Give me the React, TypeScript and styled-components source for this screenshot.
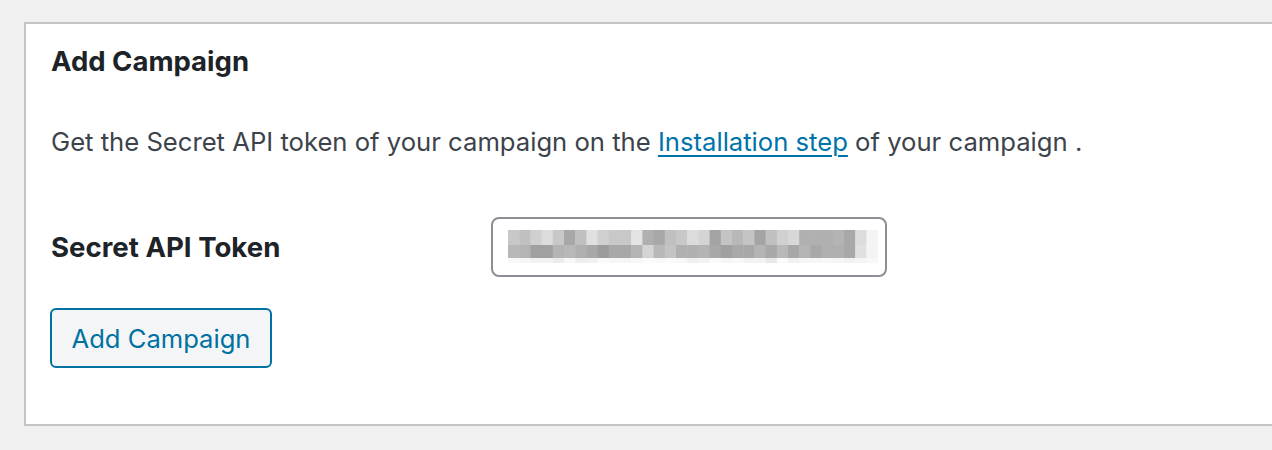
import React from "react";
import styled, { createGlobalStyle } from "styled-components";

const Global = createGlobalStyle`
  html, body { margin: 0; padding: 0; background: #f0f0f1; overflow: hidden; }
  body { font-family: Inter, "Noto Sans", sans-serif; -webkit-font-smoothing: antialiased; }
`;

const Page = styled.div`
  width: 1272px;
  height: 450px;
  padding: 22px 0 0 24px;
  box-sizing: border-box;
`;

const Panel = styled.section`
  width: 1300px;
  height: 404px;
  box-sizing: border-box;
  background: #fff;
  border: 2px solid #c3c4c7;
  padding: 0 24px;
  display: flex;
  flex-direction: column;
`;

const Title = styled.h2`
  margin: 19px 0 0 1px;
  font-size: 27.5px;
  line-height: 36px;
  font-weight: 700;
  color: #1d2327;
`;

const Intro = styled.p`
  margin: 45px 0 0 1px;
  font-size: 25.65px;
  line-height: 36px;
  color: #3c434a;
`;

const Link = styled.a`
  color: #0073aa;
  text-decoration: underline;
  text-decoration-thickness: 2px;
  text-underline-offset: 4px;
`;

const FieldRow = styled.div`
  margin-top: 57px;
  display: grid;
  grid-template-columns: 441px 396px;
  align-items: center;
`;

const Label = styled.label`
  margin-left: 1px;
  font-size: 27.6px;
  font-weight: 700;
  color: #1d2327;
`;

const TokenBox = styled.div`
  width: 396px;
  height: 60px;
  box-sizing: border-box;
  border: 2px solid #8c8f94;
  border-radius: 8px;
  background: #fff;
  display: flex;
  align-items: center;
  padding-left: 15px;
`;

const SubmitButton = styled.button`
  margin-top: 31px;
  align-self: flex-start;
  width: 222px;
  height: 60px;
  box-sizing: border-box;
  border: 2px solid #0071a1;
  border-radius: 6px;
  background: #f3f5f6;
  color: #0071a1;
  font-family: inherit;
  font-size: 25.6px;
  padding: 0;
  cursor: pointer;
`;

const row1 = ["c8","c0","d0","dc","c8","a8","c0","e0","d0","c8","c8","e4","b0","a8","c0","c8","dc","d4","a4","c4","b8","c4","a4","c0","d0","d8","b0","b0","b0","b4","a8","dc","f4"];
const row2 = ["b8","b4","a0","a0","b4","b8","b0","a8","9c","a8","a8","b4","d4","b8","c4","b0","b0","b4","a8","a0","a8","a8","b4","a8","b8","a8","b4","a8","b0","b0","a8","e0","f4"];
const row3 = ["f8","f6","f2","f2","ec","f8","ee","f0","fa","f6","f6","f8","fa","f8","fa","f8","f0","f2","fa","f6","f8","f2","f2","e8","fa","f2","f6","f6","f8","f6","f2","f4","f8"];

function BlurredToken() {
  const cw = 11.2;
  return (
    <svg width="372" height="34" viewBox="0 0 372 34" aria-hidden="true">
      {row1.map((c, i) => (
        <rect key={"a" + i} x={i * cw} y={0} width={cw + 0.5} height={15} fill={"#" + c + c + c} />
      ))}
      {row2.map((c, i) => (
        <rect key={"b" + i} x={i * cw} y={15} width={cw + 0.5} height={13} fill={"#" + c + c + c} />
      ))}
      {row3.map((c, i) => (
        <rect key={"c" + i} x={i * cw} y={28} width={cw + 0.5} height={5} fill={"#" + c + c + c} />
      ))}
    </svg>
  );
}

export default function App() {
  return (
    <>
      <Global />
      <Page>
        <Panel>
          <Title>Add Campaign</Title>
          <Intro>
            Get the Secret API token of your campaign on the <Link href="#">Installation step</Link> of your campaign .
          </Intro>
          <FieldRow>
            <Label>Secret API Token</Label>
            <TokenBox>
              <BlurredToken />
            </TokenBox>
          </FieldRow>
          <SubmitButton type="button">Add Campaign</SubmitButton>
        </Panel>
      </Page>
    </>
  );
}
